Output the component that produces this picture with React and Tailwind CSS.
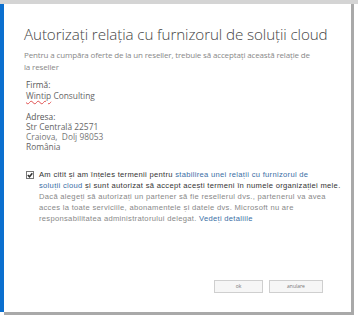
export default function App() {
  return (
    <div className="w-[361px] h-[319px] bg-white overflow-hidden relative" style={{ fontFamily: '"Open Sans", "Noto Sans", sans-serif' }}>
      <div className="h-[4px] bg-[#d4d4d4] w-[358px]" />
      <div className="flex w-[358px] h-[311px]">
        <div className="w-[4px] bg-[#0b6fcf] h-[308px]" />
        <div className="flex flex-col w-[350px] h-[311px] border-r-[3px] border-b-[3px] border-[#a9a9a9] bg-white">
          <div className="pl-[20px] pr-[10px] pt-[19px]">
            <div className="text-[15.2px] font-light text-[#444] leading-[22px] tracking-[-0.1px] whitespace-nowrap">Autorizați relația cu furnizorul de soluții cloud</div>
            <div className="mt-[4px] text-[8px] text-[#888] leading-[11.5px] tracking-[-0.15px] whitespace-nowrap">Pentru a cumpăra oferte de la un reseller, trebuie să acceptați această relație de<br />la reseller</div>
          </div>
          <div className="pl-[22px] mt-[8px] text-[8.4px] leading-[10px] text-[#555]">
            <div>Firmă:</div>
            <div className="mt-[1px] text-[#666]"><span className="underline decoration-wavy decoration-[#e05050] decoration-[0.5px]">Wintip</span> Consulting</div>
            <div className="mt-[11px]">Adresa:</div>
            <div className="text-[#666]">Str Centrală 22571</div>
            <div className="text-[#777]">Craiova,&nbsp; Dolj 98053</div>
            <div className="text-[#666]">România</div>
          </div>
          <div className="flex pl-[22px] mt-[17px]">
            <div className="w-[8px] h-[8px] border border-[#777] flex items-center justify-center mt-[2px] shrink-0">
              <svg width="6" height="6" viewBox="0 0 6 6"><path d="M0.8 3 L2.5 4.8 L5.3 1.2" stroke="#333" strokeWidth="1.5" fill="none" /></svg>
            </div>
            <div className="ml-[5px] text-[7.6px] leading-[11px] tracking-[0.3px] whitespace-nowrap" style={{ fontFamily: '"Liberation Sans", Arial, sans-serif' }}>
              <div className="text-[#333]">Am citit și am înțeles termenii pentru <span className="text-[#3a6ea5]">stabilirea unei relații cu furnizorul de</span></div>
              <div className="text-[#333]"><span className="text-[#3a6ea5]">soluții cloud</span> și sunt autorizat să accept acești termeni în numele organizației mele.</div>
              <div className="text-[#888]">Dacă alegeți să autorizați un partener să fie resellerul dvs., partenerul va avea</div>
              <div className="text-[#888]">acces la toate serviciile, abonamentele și datele dvs. Microsoft nu are</div>
              <div className="text-[#888]">responsabilitatea administratorului delegat. <span className="text-[#3a6ea5]">Vedeți detaliile</span></div>
            </div>
          </div>
          <div className="flex-1" />
          <div className="flex justify-end gap-[6px] pr-[28px] pb-[19px]">
            <div className="w-[49px] h-[13px] bg-[#f6f6f6] border border-[#cfcfcf] text-[5px] text-[#777] flex items-center justify-center">ok</div>
            <div className="w-[54px] h-[13px] bg-[#f6f6f6] border border-[#cfcfcf] text-[5px] text-[#777] flex items-center justify-center">anulare</div>
          </div>
        </div>
      </div>
    </div>
  );
}
